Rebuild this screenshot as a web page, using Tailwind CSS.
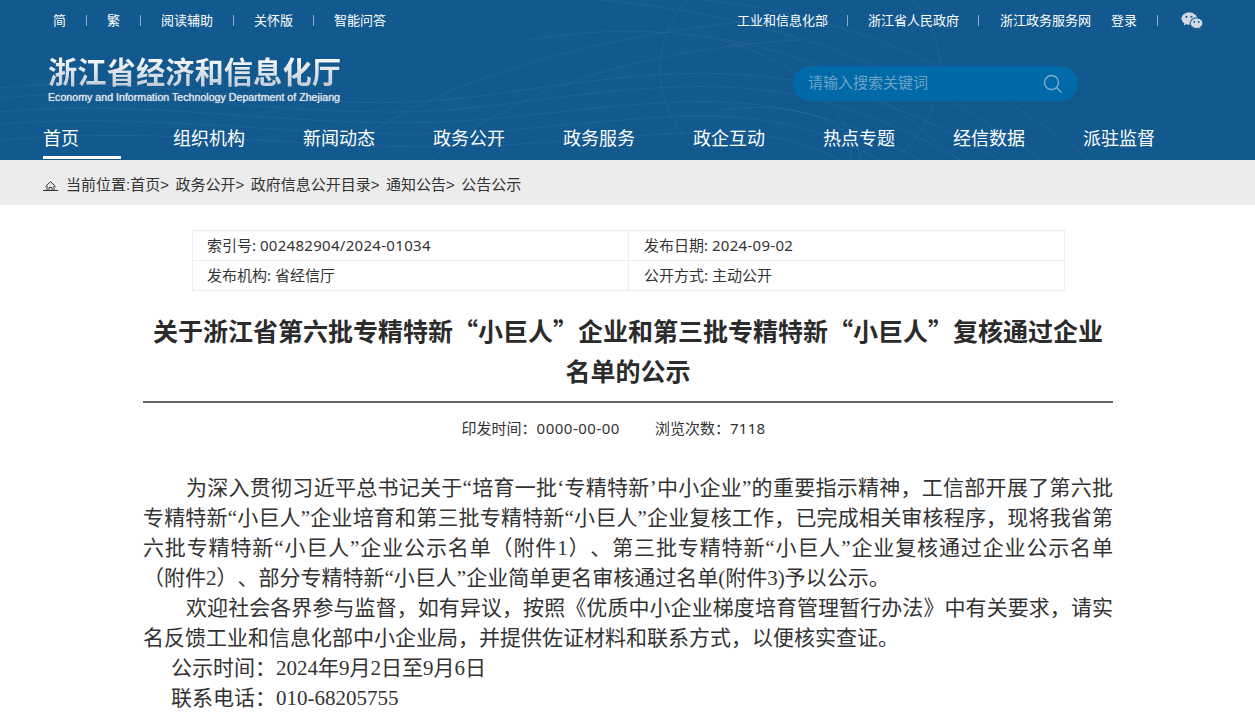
<!DOCTYPE html>
<html lang="zh-CN">
<head>
  <meta charset="UTF-8" />
  <title>浙江省经济和信息化厅</title>
  <script src="https://cdn.jsdelivr.net/npm/@tailwindcss/browser@4"></script>
</head>
<body class="bg-white text-[#333] font-['Liberation_Sans','Noto_Sans_CJK_SC',sans-serif] overflow-hidden">
  <!-- 头部 -->
  <header class="relative h-[160px] bg-[#12598f] text-white overflow-hidden">
    <svg class="absolute inset-0" width="1255" height="160" fill="none" stroke="#ffffff" stroke-opacity="0.055">
      <path d="M0 88C150 70 300 120 480 96S800 40 1000 160" />
      <path d="M0 98C160 82 310 128 490 106S790 60 960 160" />
      <path d="M0 112C170 96 320 136 500 118S780 80 920 160" />
      <path d="M0 124C180 110 330 146 510 130S770 100 880 160" />
      <path d="M0 140C190 124 340 156 520 144S760 120 840 160" />
      <path d="M330 160C420 90 560 40 760 20" />
      <path d="M430 160C500 100 620 50 800 40" />
      <path d="M530 40C640 20 800 30 910 120L960 160" />
      <path d="M600 0C720 10 900 50 1040 160" />
      <path d="M700 0C830 10 980 70 1090 160" />
      <path d="M720 40C800 60 860 120 850 160" />
      <path d="M720 110C790 100 860 120 860 160" />
      <ellipse cx="800" cy="70" rx="140" ry="120" />
    </svg>

    <div class="relative flex items-center justify-between h-[40px] pl-[53px] pr-[52px] text-[13px] pt-px">
      <ul class="flex items-center">
        <li>简</li>
        <li class="ml-[20px] pl-[20px] border-l border-white/50 leading-[11px]">繁</li>
        <li class="ml-[20px] pl-[20px] border-l border-white/50 leading-[11px]">阅读辅助</li>
        <li class="ml-[20px] pl-[20px] border-l border-white/50 leading-[11px]">关怀版</li>
        <li class="ml-[20px] pl-[20px] border-l border-white/50 leading-[11px]">智能问答</li>
      </ul>
      <ul class="flex items-center">
        <li>工业和信息化部</li>
        <li class="ml-[19px] pl-[20px] border-l border-white/50 leading-[11px]">浙江省人民政府</li>
        <li class="ml-[19px] pl-[21px] border-l border-white/50 leading-[11px]">浙江政务服务网</li>
        <li class="ml-[20px]">登录</li>
        <li class="ml-[20px] pl-[23px] border-l border-white/50 leading-[11px] h-[11px] flex items-center">
          <svg width="22" height="18" viewBox="0 0 22 18" fill="#d3d9e5">
            <path d="M8 0.5C3.8 0.5 0.5 3.2 0.5 6.600c0 2 1.100 3.600 2.800 4.800L2.600 13.600l2.500-1.300c1 .3 2 .5 3.100.5h.6C8.500 8 11 5.500 16.200 5.500C15.300 2.600 12 .5 8 .5Z" />
            <path stroke="#12598f" stroke-width=".8" d="M21.800 11.200c0-2.900-2.900-5.200-6.200-5.200s-6.200 2.300-6.200 5.200 2.900 5.200 6.200 5.200c.7 0 1.300-.1 1.900-.3l2 1.300-.5-2c1.700-1 2.800-2.500 2.800-4.200Z" />
            <g fill="#12598f">
              <circle cx="5.500" cy="4.800" r="1.100" /><circle cx="10.500" cy="4.800" r="1.100" />
              <circle cx="13.300" cy="10" r=".9" /><circle cx="17.700" cy="10" r=".9" />
            </g>
          </svg>
        </li>
      </ul>
    </div>

    <div class="relative flex items-start h-[78px] pl-[48px]">
      <div class="w-[293px] pt-[15px]">
        <div class="text-[29.3px] leading-[36px] font-bold whitespace-nowrap text-transparent bg-clip-text bg-gradient-to-b from-white to-[#b9c4cf]">浙江省经济和信息化厅</div>
        <div class="text-[10.650px] leading-[12px] whitespace-nowrap text-[#dfe5ea] [text-shadow:0_0_1px_#dfe5ea]">Economy and Information Technology Department of Zhejiang</div>
      </div>
      <div class="flex items-center justify-between ml-[452px] mt-[26px] w-[285px] h-[35px] rounded-full bg-[#0069a8] pl-[15px] pr-[15px]">
        <span class="text-[15px] text-[#6ea3c6]">请输入搜索关键词</span>
        <svg width="20" height="20" viewBox="0 0 20 20" fill="none" stroke="#7fb0ce" stroke-width="1.400">
          <circle cx="8.500" cy="8.500" r="7" /><path d="M13.500 13.500l5 5" />
        </svg>
      </div>
    </div>

    <nav class="relative flex h-[42px] pl-[43px] text-[18px] leading-[42px]">
      <a class="w-[78px] mr-[52px] h-[41px] border-b-[3px] border-white">首页</a>
      <a class="w-[130px]">组织机构</a>
      <a class="w-[130px]">新闻动态</a>
      <a class="w-[130px]">政务公开</a>
      <a class="w-[130px]">政务服务</a>
      <a class="w-[130px]">政企互动</a>
      <a class="w-[130px]">热点专题</a>
      <a class="w-[130px]">经信数据</a>
      <a class="w-[130px]">派驻监督</a>
    </nav>
  </header>

  <!-- 面包屑 -->
  <div class="flex items-center h-[45px] pt-[6px] bg-[#ececec] pl-[43px] text-[15px] text-[#333]">
    <svg class="mr-[8px]" width="15" height="10" viewBox="0 0 15 10" fill="none" stroke="#333" stroke-width="1">
      <path d="M0 9.500H15M2.500 5.500L7.500 .7L12.500 5.500M4 5V9.500M11 5V9.500M6 9.500V6.500H9V9.500" />
    </svg>
    <span>当前位置:首页&gt;</span>
    <span class="ml-[6.500px]">政务公开&gt;</span>
    <span class="ml-[6.500px]">政府信息公开目录&gt;</span>
    <span class="ml-[6.500px]">通知公告&gt;</span>
    <span class="ml-[6.500px]">公告公示</span>
  </div>

  <!-- 信息表 -->
  <table class="ml-[192px] mt-[25px] w-[873px] border-collapse text-[15px] text-[#333] table-fixed font-['Noto_Sans','Noto_Sans_CJK_SC',sans-serif]">
    <tr class="h-[30px]">
      <td class="w-[436px] border border-[#eee] pl-[14px]">索引号: <span class="tracking-[0.3px]">002482904/2024-01034</span></td>
      <td class="border border-[#eee] pl-[15px]">发布日期: <span class="tracking-[0.3px]">2024-09-02</span></td>
    </tr>
    <tr class="h-[30px]">
      <td class="border border-[#eee] pl-[14px]">发布机构: 省经信厅</td>
      <td class="border border-[#eee] pl-[15px]">公开方式: 主动公开</td>
    </tr>
  </table>

  <!-- 正文 -->
  <main class="w-[970px] ml-[143px]">
    <h1 class="mt-[19px] pb-[11px] text-[25px] leading-[40px] font-bold text-center text-[#2b2b2b] border-b-2 border-[#666] font-['Noto_Sans_CJK_SC',sans-serif]">关于浙江省第六批专精特新“小巨人”企业和第三批专精特新“小巨人”复核通过企业名单的公示</h1>
    <div class="mt-[15px] pr-[29px] flex justify-center gap-[35px] text-[15px] leading-[20px] text-[#333] font-['Noto_Sans','Noto_Sans_CJK_SC',sans-serif]">
      <span>印发时间：<span class="tracking-[0.500px]">0000-00-00</span></span>
      <span>浏览次数：<span class="tracking-[0.300px]">7118</span></span>
    </div>
    <article class="mt-[35px] text-[21px] leading-[30px] text-[#333] text-justify [text-spacing-trim:space-all] font-['Liberation_Serif','Noto_Sans_CJK_SC',serif]">
      <p class="indent-[43px]">为深入贯彻习近平总书记关于“培育一批‘专精特新’中小企业”的重要指示精神，工信部开展了第六批专精特新“小巨人”企业培育和第三批专精特新“小巨人”企业复核工作，已完成相关审核程序，现将我省第六批专精特新“小巨人”企业公示名单（附件1）、第三批专精特新“小巨人”企业复核通过企业公示名单（附件2）、部分专精特新“小巨人”企业简单更名审核通过名单(附件3)予以公示。</p>
      <p class="indent-[43px]">欢迎社会各界参与监督，如有异议，按照《优质中小企业梯度培育管理暂行办法》中有关要求，请实名反馈工业和信息化部中小企业局，并提供佐证材料和联系方式，以便核实查证。</p>
      <p class="pl-[28px]">公示时间：2024年9月2日至9月6日</p>
      <p class="pl-[28px]">联系电话：010-68205755</p>
    </article>
  </main>
</body>
</html>
